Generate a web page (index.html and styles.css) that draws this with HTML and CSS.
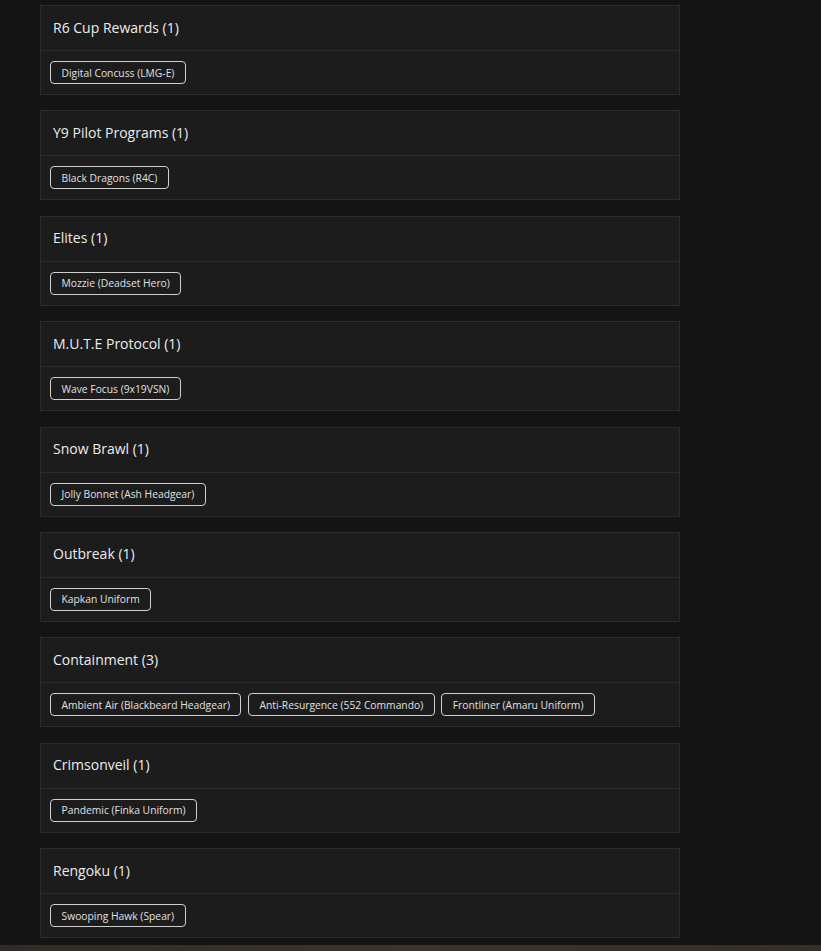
FILE: index.html
```html
<!DOCTYPE html>
<html>
<head>
<meta charset="utf-8">
<link rel="stylesheet" href="styles.css">
</head>
<body>
<main class="list">
  <section class="card"><header class="card-head">R6 Cup Rewards (1)</header><div class="card-body"><span class="tag">Digital Concuss (LMG-E)</span></div></section>
  <section class="card"><header class="card-head">Y9 Pilot Programs (1)</header><div class="card-body"><span class="tag">Black Dragons (R4C)</span></div></section>
  <section class="card"><header class="card-head">Elites (1)</header><div class="card-body"><span class="tag">Mozzie (Deadset Hero)</span></div></section>
  <section class="card"><header class="card-head">M.U.T.E Protocol (1)</header><div class="card-body"><span class="tag">Wave Focus (9x19VSN)</span></div></section>
  <section class="card"><header class="card-head">Snow Brawl (1)</header><div class="card-body"><span class="tag">Jolly Bonnet (Ash Headgear)</span></div></section>
  <section class="card"><header class="card-head">Outbreak (1)</header><div class="card-body"><span class="tag">Kapkan Uniform</span></div></section>
  <section class="card"><header class="card-head">Containment (3)</header><div class="card-body"><span class="tag">Ambient Air (Blackbeard Headgear)</span><span class="tag">Anti-Resurgence (552 Commando)</span><span class="tag">Frontliner (Amaru Uniform)</span></div></section>
  <section class="card"><header class="card-head">Crimsonveil (1)</header><div class="card-body"><span class="tag">Pandemic (Finka Uniform)</span></div></section>
  <section class="card"><header class="card-head">Rengoku (1)</header><div class="card-body"><span class="tag">Swooping Hawk (Spear)</span></div></section>
</main>
<footer class="footer"></footer>
</body>
</html>
```
FILE: styles.css
```css
html, body {
  margin: 0;
  padding: 0;
  background: #141414;
}
body {
  font-family: "Open Sans", "DejaVu Sans", sans-serif;
  color: #e6e6e6;
  height: 951px;
  overflow: hidden;
}
.list {
  width: 640px;
  padding: 5px 0 0 40px;
  display: flex;
  flex-direction: column;
  gap: 15.4px;
}
.card {
  background: #1c1c1c;
  border: 1px solid #2b2b2b;
  box-sizing: border-box;
  height: 90px;
  display: flex;
  flex-direction: column;
}
.card-head {
  height: 45px;
  box-sizing: border-box;
  border-bottom: 1px solid #2b2b2b;
  padding: 0 12px 2px;
  display: flex;
  align-items: center;
  font-size: 14px;
  font-weight: 500;
  color: #ececec;
}
.card-body {
  padding: 10px 9px 0;
  display: flex;
  gap: 6.5px;
}
.tag {
  height: 23px;
  box-sizing: border-box;
  border: 1px solid #cfcfcf;
  border-radius: 4px;
  padding: 0 10.5px;
  display: flex;
  align-items: center;
  font-size: 10.3px;
  color: #e0e0e0;
}
.footer {
  margin-top: 7px;
  height: 20px;
  background: linear-gradient(90deg, #302b26, #3b342d 50%, #342e28);
}
```
